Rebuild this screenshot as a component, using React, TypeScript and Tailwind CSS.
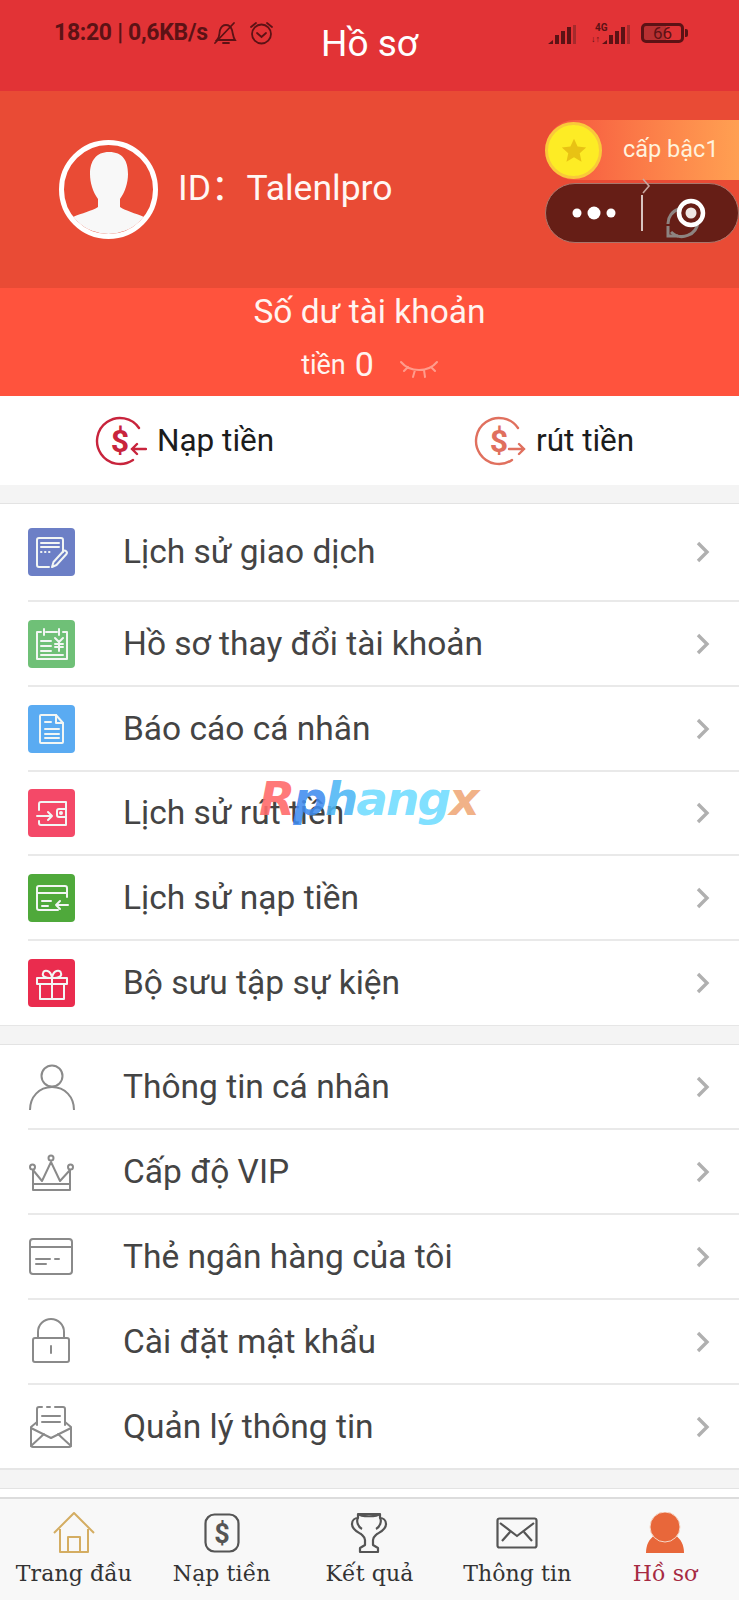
import React from "react";

type R = { label: string; h: string; icon: React.ReactNode; last?: boolean };

const S = ({ children, w = 47, h = 47 }: { children: React.ReactNode; w?: number; h?: number }) => (
  <svg width={w} height={h} viewBox={`0 0 ${w} ${h}`} fill="none" stroke="currentColor" strokeWidth="2" strokeLinecap="round" strokeLinejoin="round">
    {children}
  </svg>
);

const Box = ({ color, children }: { color: string; children: React.ReactNode }) => (
  <div className={`w-[47px] h-[48px] rounded-[4px] shrink-0 flex items-center justify-center text-[#f2f6f4] ${color}`}>{children}</div>
);

const Gray = ({ children }: { children: React.ReactNode }) => (
  <div className="w-[47px] h-[48px] shrink-0 flex items-center justify-center text-[#8a8a8a]">{children}</div>
);

const Chevron = () => (
  <svg width="16" height="24" viewBox="0 0 16 24" fill="none" stroke="#b0b0b0" strokeWidth="3.4">
    <path d="M3 3l9 9-9 9" />
  </svg>
);

const group1: R[] = [
  {
    label: "Lịch sử giao dịch", h: "h-[98px]",
    icon: (
      <Box color="bg-[#6c7fc6]">
        <S>
          <path d="M35 23V11a2 2 0 0 0-2-2H11a2 2 0 0 0-2 2v25a2 2 0 0 0 2 2h10" />
          <path d="M13 14h18M13 18h18" />
          <path d="M13 23h.5M17 23h.5M21 23h.5" />
          <path d="M24 38l1.5-5 10-11c1.5-1.5 4.5 1 3 3l-10 11z" />
        </S>
      </Box>
    ),
  },
  {
    label: "Hồ sơ thay đổi tài khoản", h: "h-[85px]",
    icon: (
      <Box color="bg-[#6fc077]">
        <S>
          <path d="M13 12h-4v27h30V12h-4M18 12h11" />
          <path d="M16 9v6M31 9v6" />
          <path d="M13 21h10M13 26h10M13 31h10M13 35h22" />
          <path d="M27 18l4 4 4-4M31 22v9M27 24h8M27 27h8" />
        </S>
      </Box>
    ),
  },
  {
    label: "Báo cáo cá nhân", h: "h-[85px]",
    icon: (
      <Box color="bg-[#5aabf2]">
        <S>
          <path d="M13 10h15l7 8v19a1 1 0 0 1-1 1H13a1 1 0 0 1-1-1V11a1 1 0 0 1 1-1z" />
          <path d="M28 10v8h7" />
          <path d="M17 17h6M17 24h14M17 29h14M17 33h14" />
        </S>
      </Box>
    ),
  },
  {
    label: "Lịch sử rút tiền", h: "h-[84px]",
    icon: (
      <Box color="bg-[#f44968]">
        <S>
          <path d="M11 20v-6a2 2 0 0 1 2-2h25v23H13a2 2 0 0 1-2-2v-2" />
          <path d="M9 26h15M20 22l4 4-4 4" />
          <path d="M38 19h-7a2 2 0 0 0-2 2v4a2 2 0 0 0 2 2h7" />
          <circle cx="33" cy="23" r="1" />
        </S>
      </Box>
    ),
  },
  {
    label: "Lịch sử nạp tiền", h: "h-[85px]",
    icon: (
      <Box color="bg-[#4fa93b]">
        <S>
          <path d="M39 23V14a2 2 0 0 0-2-2H11a2 2 0 0 0-2 2v20a2 2 0 0 0 2 2h19" />
          <path d="M9 19h30M14 27h9M14 32h6" />
          <path d="M40 31H28M32 27l-4 4 4 4" />
        </S>
      </Box>
    ),
  },
  {
    label: "Bộ sưu tập sự kiện", h: "h-[84px]", last: true,
    icon: (
      <Box color="bg-[#ea2c4e]">
        <S>
          <path d="M9 18h30v6H9zM12 24v15h24V24" />
          <path d="M24 18v21" />
          <path d="M24 18c-8 0-10-2-9-5 1-4 8-3 9 5zM24 18c8 0 10-2 9-5-1-4-8-3-9 5z" />
        </S>
      </Box>
    ),
  },
];

const group2: R[] = [
  {
    label: "Thông tin cá nhân", h: "h-[85px]",
    icon: (
      <Gray>
        <S>
          <circle cx="24" cy="13" r="10.5" />
          <path d="M2 47c0-13 9-23 22-23s22 10 22 23" />
        </S>
      </Gray>
    ),
  },
  {
    label: "Cấp độ VIP", h: "h-[85px]",
    icon: (
      <Gray>
        <S>
          <path d="M5 36V22l9 11 9-19 9 19 10-11v14z" />
          <path d="M5 36h37v6H5z" />
          <circle cx="23" cy="10" r="2.5" />
          <circle cx="4.5" cy="19" r="2.5" />
          <circle cx="42.5" cy="19" r="2.5" />
        </S>
      </Gray>
    ),
  },
  {
    label: "Thẻ ngân hàng của tôi", h: "h-[85px]",
    icon: (
      <Gray>
        <S>
          <rect x="2" y="6" width="42" height="35" rx="3" />
          <path d="M2 14h42" />
          <path d="M8 26h14M8 31h10M27 26h4" />
        </S>
      </Gray>
    ),
  },
  {
    label: "Cài đặt mật khẩu", h: "h-[85px]",
    icon: (
      <Gray>
        <S>
          <rect x="5" y="20" width="36" height="24" rx="2" />
          <path d="M10 20v-6a13 13 0 0 1 26 0v6" />
          <path d="M23 28v7" />
        </S>
      </Gray>
    ),
  },
  {
    label: "Quản lý thông tin", h: "h-[83px]", last: true,
    icon: (
      <Gray>
        <S>
          <path d="M9 22V6a2 2 0 0 1 2-2h3M19 4h3M27 4h8a2 2 0 0 1 2 2v16" />
          <path d="M14 13h18M14 19h18" />
          <path d="M9 19l-6 5v18a2 2 0 0 0 2 2h36a2 2 0 0 0 2-2V24l-6-5" />
          <path d="M3 25l20 10 20-10M3 43l13-12M43 43L30 31" />
        </S>
      </Gray>
    ),
  },
];

const Row = ({ r }: { r: R }) => (
  <div className={`${r.h} ml-[28px] pr-[28px] flex items-center ${r.last ? "" : "border-b-2 border-[#e9e9e9]"}`}>
    {r.icon}
    <span className="ml-[48px] flex-1 text-[33.5px] text-[#444444] font-['Roboto',sans-serif] leading-none">{r.label}</span>
    <Chevron />
  </div>
);

const MoneyIcon = ({ color, out }: { color: string; out?: boolean }) => (
  <svg width="52" height="50" viewBox="0 0 52 50" fill="none" stroke={color} strokeWidth="2.4" strokeLinecap="round">
    <path d="M44 12A23 23 0 1 0 38 44" />
    <text x="25" y="36" fontSize="32" fontWeight="700" textAnchor="middle" fill={color} stroke="none" fontFamily="Roboto, sans-serif">$</text>
    {out ? <path d="M35 33h15M45 28l5 5-5 5" /> : <path d="M37 33h14M42 28l-5 5 5 5" />}
  </svg>
);

const Tab = ({ label, active, icon }: { label: string; active?: boolean; icon: React.ReactNode }) => (
  <div className="flex-1 flex flex-col items-center">
    <div className="h-[42px] flex items-center">{icon}</div>
    <span className={`mt-[6px] text-[22px] leading-[28px] font-['DejaVu_Serif',serif] whitespace-nowrap tracking-[0.1px] ${active ? "text-[#a62a42]" : "text-[#333333]"}`}>{label}</span>
  </div>
);

const StatusDark = "#5c1215";

const Signal = () => (
  <svg width="28" height="19" viewBox="0 0 28 19">
    <path d="M0 19l5-4v4z M7 10h4v9H7z M13 6h4v13h-4z M19 2h4v17h-4z" fill={StatusDark} />
    <path d="M25 0h3v19h-3z" fill="#a52a2c" />
  </svg>
);

export default function App() {
  return (
    <div className="relative w-[739px] h-[1600px] overflow-hidden flex flex-col bg-white font-['Roboto',sans-serif]">
      {/* header */}
      <div className="h-[91px] shrink-0 bg-[#e23336] flex items-start">
        <div className="w-[285px] pl-[54px] pt-[20px] flex items-center">
          <span className="text-[23px] leading-[26px] font-bold text-[#5c1215] whitespace-nowrap tracking-[-0.3px]">18:20 | 0,6KB/s</span>
          <svg className="ml-[5px] shrink-0" width="25" height="24" viewBox="0 0 25 24" fill="none" stroke="#5c1215" strokeWidth="1.8" strokeLinecap="round">
            <path d="M4 19c3-3 2-6 3-10 1-3 3-5 6-5s5 2 6 5c1 4 1 7 3 10z" />
            <path d="M10 22h6M2 22L21 2" />
          </svg>
          <svg className="ml-[11px] shrink-0" width="25" height="24" viewBox="0 0 25 24" fill="none" stroke="#5c1215" strokeWidth="1.8" strokeLinecap="round">
            <circle cx="12.5" cy="13" r="9.5" />
            <path d="M8 12l4.5 4 4.5-4M2 6l5-4M23 6l-5-4" />
          </svg>
        </div>
        <div className="flex-1 text-center pt-[24px] text-[37px] leading-[40px] text-white">Hồ sơ</div>
        <div className="w-[285px] pt-[23px] pl-[94px] flex items-start">
          <div className="mt-[2px]"><Signal /></div>
          <div className="ml-[15px] relative w-[39px] h-[21px]">
            <div className="text-[10px] leading-[10px] font-bold text-[#5c1215] ml-[4px]">4G</div>
            <div className="text-[9px] leading-[9px] text-[#5c1215] mt-[2px]">↓↑</div>
            <div className="absolute right-0 top-[2px]"><Signal /></div>
          </div>
          <div className="ml-[11px] w-[43px] h-[20px] border-[3px] border-[#5c1215] rounded-[5px] flex items-center justify-center text-[17px] leading-none text-[#5c1215] bg-gradient-to-r from-[#b83032] from-60% to-[#e23336] to-60%">66</div>
          <div className="mt-[6px] ml-[1px] w-[3px] h-[8px] bg-[#5c1215] rounded-r-[2px]" />
        </div>
      </div>

      {/* profile */}
      <div className="h-[197px] shrink-0 bg-[#e94b35] flex items-start">
        <div className="mt-[49px] ml-[59px] w-[99px] h-[99px] shrink-0 rounded-full border-[5px] border-white overflow-hidden">
          <svg width="89" height="89" viewBox="1 1 89 89" fill="#f8f8f8">
            <path d="M46 8c-13 0-19 9-19 22 0 9 3 18 8 25v8c-6 4-16 6-25 10L0 91h91L81 73c-9-4-18-6-24-10v-8c5-7 8-16 8-25 0-13-5-22-19-22z" />
          </svg>
        </div>
        <div className="ml-[20px] mt-[75px] text-[35.5px] leading-[44px] text-[#fff7f4] whitespace-nowrap font-['Roboto','Noto_Sans_CJK_SC',sans-serif]">ID：Talenlpro</div>
        <div className="ml-auto mt-[29px] w-[194px] shrink-0 flex flex-col items-end">
          <div className="relative w-full h-[60px] flex items-center rounded-l-full bg-gradient-to-r from-[#f5503e] to-[#ffa052]">
            <div className="w-[57px] h-[57px] ml-0 rounded-full bg-[#fdec25] border-[3px] border-[#f9c93a] flex items-center justify-center">
              <svg width="28" height="27" viewBox="0 0 24 24" fill="#e8c214">
                <path d="M12 1.5l3.2 7 7.6.8-5.7 5.1 1.6 7.5L12 18l-6.700 3.900 1.600-7.500L1.200 9.300l7.600-.8z" />
              </svg>
            </div>
            <span className="ml-[21px] text-[23.5px] text-[#fff2dc] whitespace-nowrap">cấp bậc1</span>
          </div>
          <div className="relative mt-[3px] w-[194px] h-[60px] rounded-full bg-[#661e16] border border-[#a9766c] flex items-center">
            <svg className="ml-[26px]" width="44" height="16" viewBox="0 0 44 16" fill="#fff">
              <circle cx="5" cy="8" r="4.500" /><circle cx="22" cy="8" r="6.500" /><circle cx="39" cy="8" r="4.500" />
            </svg>
            <div className="ml-[25px] w-[2px] h-[36px] bg-[#d8c4c0]" />
            <svg className="ml-[22px]" width="54" height="54" viewBox="0 0 54 54" fill="none">
              <path d="M3 38A15 15 0 0 1 14 23M33 36A16 16 0 0 1 6 46" stroke="#8d8481" strokeWidth="3" />
              <path d="M3 40v10h10" stroke="#8d8481" strokeWidth="3" />
              <circle cx="26" cy="27" r="12" stroke="#fff" strokeWidth="4.500" />
              <circle cx="26" cy="27" r="5.500" fill="#efe6e3" />
            </svg>
            <svg className="absolute left-[95px] -top-[7px]" width="10" height="18" viewBox="0 0 10 18" fill="none" stroke="#c9a69f" strokeWidth="1.600">
              <path d="M2 2l6 7-6 7" />
            </svg>
          </div>
        </div>
      </div>

      {/* balance */}
      <div className="h-[108px] shrink-0 bg-[#ff533d] flex flex-col items-center text-white">
        <div className="mt-[5px] text-[33.5px] leading-[38px] text-[#fff4f0]">Số dư tài khoản</div>
        <div className="mt-[15px] flex items-end">
          <span className="text-[27px] leading-[34px] text-[#fff4f0]">tiền</span>
          <span className="ml-[9px] text-[34px] leading-[36px] text-[#fff4f0]">0</span>
          <svg className="ml-[26px] mb-[3px]" width="38" height="20" viewBox="0 0 38 20" fill="none" stroke="#ff9c8c" strokeWidth="2" strokeLinecap="round">
            <path d="M1 3c5 6 11 8 18 8s13-2 18-8M8 8L4 12M15 11l-2 7M24 11l1 7M31 8l4 4" />
          </svg>
        </div>
      </div>

      {/* actions */}
      <div className="h-[89px] shrink-0 flex items-center bg-white">
        <div className="w-[370px] pl-[95px] flex items-center">
          <MoneyIcon color="#c8243c" />
          <span className="ml-[10px] text-[31.5px] text-[#1c1c1c] whitespace-nowrap">Nạp tiền</span>
        </div>
        <div className="flex-1 pl-[104px] flex items-center">
          <MoneyIcon color="#e0705e" out />
          <span className="ml-[10px] text-[31.5px] text-[#1c1c1c] whitespace-nowrap">rút tiền</span>
        </div>
      </div>

      <div className="h-[19px] shrink-0 bg-[#f4f4f4] border-b border-[#e3e3e3]" />

      <div className="shrink-0 bg-white border-b border-[#e6e6e6]">
        {group1.map((r) => <Row key={r.label} r={r} />)}
      </div>

      <div className="h-[19px] shrink-0 bg-[#f4f4f4] border-b border-[#e3e3e3]" />

      <div className="shrink-0 bg-white border-b-2 border-[#e6e6e6]">
        {group2.map((r) => <Row key={r.label} r={r} />)}
      </div>

      <div className="h-[19px] shrink-0 bg-[#f4f4f4] border-b border-[#e3e3e3]" />
      <div className="h-[8px] shrink-0 bg-white" />

      {/* tab bar */}
      <div className="flex-1 bg-[#f8f8f8] border-t-2 border-[#dcdcdc] flex pt-[13px]">
        <Tab label="Trang đầu" icon={
          <svg width="42" height="42" viewBox="0 0 42 42" fill="none" stroke="#d4ad62" strokeWidth="2" strokeLinejoin="round">
            <path d="M1 21L21 1l20 20M7 17v23h28V17" />
            <path d="M15 40V25h12v15" />
          </svg>
        } />
        <Tab label="Nạp tiền" icon={
          <svg width="36" height="40" viewBox="0 0 36 40" fill="none" stroke="#555" strokeWidth="2.200">
            <rect x="1.500" y="1.500" width="33" height="37" rx="9" />
            <text x="18" y="30" fontSize="27" fontWeight="700" textAnchor="middle" fill="#555" stroke="none" fontFamily="Roboto, sans-serif">$</text>
          </svg>
        } />
        <Tab label="Kết quả" icon={
          <svg width="38" height="42" viewBox="0 0 38 42" fill="none" stroke="#555" strokeWidth="2.200" strokeLinejoin="round">
            <path d="M8 2h22v4c3 0 6 2 6 6 0 6-6 8-9 10-2 2-4 3-4 6v5l5 3v4H10v-4l5-3v-5c0-3-2-4-4-6-3-2-9-4-9-10 0-4 3-6 6-6z" />
            <path d="M8 6c-2 3 0 9 4 11M30 6c2 3 0 9-4 11" />
            <path d="M8 2c3 3 19 3 22 0" />
          </svg>
        } />
        <Tab label="Thông tin" icon={
          <svg width="42" height="32" viewBox="0 0 42 32" fill="none" stroke="#555" strokeWidth="2.200" strokeLinejoin="round">
            <rect x="1.500" y="1.500" width="39" height="29" rx="2" />
            <path d="M4 6l17 13L38 6M6 24l8-9M36 24l-8-9" />
          </svg>
        } />
        <Tab label="Hồ sơ" active icon={
          <svg width="40" height="42" viewBox="0 0 40 42" fill="#e8673a">
            <path d="M1 41c0-8 3-14 9-18 3 3 6 5 10 5s7-2 10-5c6 4 9 10 9 18z" />
            <circle cx="20" cy="15" r="15" stroke="#f6d8c8" strokeWidth="1" />
          </svg>
        } />
      </div>

      {/* watermark over the list */}
      <div className="absolute left-[259px] top-[769px] text-[47px] leading-[60px] font-['DejaVu_Sans',sans-serif] font-bold italic tracking-[-2px] whitespace-nowrap pointer-events-none">
        <span className="text-[#ff6a6a]/90">R</span>
        <span className="text-[#3f8cf0]/90">p</span>
        <span className="text-[#4db6f5]/90">h</span>
        <span className="text-[#6fdcff]/90">a</span>
        <span className="text-[#6fdcff]/90">n</span>
        <span className="text-[#6fdcff]/90">g</span>
        <span className="text-[#f0a878]/90">x</span>
      </div>
    </div>
  );
}
